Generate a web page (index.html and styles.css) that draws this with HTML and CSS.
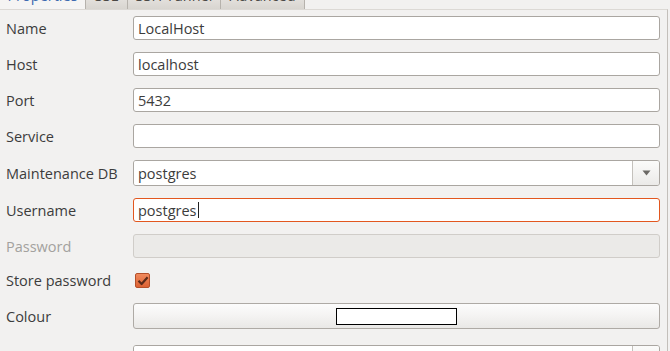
FILE: index.html
```html
<!DOCTYPE html>
<html>
<head>
<meta charset="utf-8">
<link rel="stylesheet" href="styles.css">
</head>
<body>
<div class="tabbar">
  <div class="tab tab-active"><span>Properties</span></div>
  <div class="tab tab-ssl"><span>SSL</span></div>
  <div class="tab tab-ssh"><span>SSH Tunnel</span></div>
  <div class="tab tab-adv"><span>Advanced</span></div>
</div>
<div class="panel">
  <div class="row">
    <label class="label">Name</label>
    <div class="entry">LocalHost</div>
  </div>
  <div class="row">
    <label class="label">Host</label>
    <div class="entry">localhost</div>
  </div>
  <div class="row">
    <label class="label">Port</label>
    <div class="entry">5432</div>
  </div>
  <div class="row">
    <label class="label">Service</label>
    <div class="entry"></div>
  </div>
  <div class="row row-combo">
    <label class="label">Maintenance DB</label>
    <div class="combo">
      <div class="combo-text">postgres</div>
      <div class="combo-btn"><svg width="9" height="6" viewBox="0 0 9 6"><path d="M0.5 0.5 H8.5 L4.5 5.5 Z" fill="#6b6965"/></svg></div>
    </div>
  </div>
  <div class="row">
    <label class="label">Username</label>
    <div class="entry entry-focus">postgres<span class="caret"></span></div>
  </div>
  <div class="row">
    <label class="label label-disabled">Password</label>
    <div class="entry entry-disabled"></div>
  </div>
  <div class="row row-check">
    <label class="label">Store password</label>
    <div class="checkbox"><svg width="12" height="10" viewBox="0 0 12 10"><path d="M1.5 4.8 L4.6 8 L10.6 1.2" fill="none" stroke="#5b2b1a" stroke-width="2.2" stroke-linejoin="round"/></svg></div>
  </div>
  <div class="row row-colour">
    <label class="label">Colour</label>
    <div class="button"><div class="swatch"></div></div>
  </div>
  <div class="row row-combo">
    <label class="label"></label>
    <div class="combo">
      <div class="combo-text"></div>
      <div class="combo-btn"></div>
    </div>
  </div>
</div>
</body>
</html>
```
FILE: styles.css
```css
html, body {
  margin: 0;
  padding: 0;
  background: #f2f1f0;
  overflow: hidden;
}
body {
  width: 670px;
  height: 351px;
  font-family: "Open Sans", "DejaVu Sans", sans-serif;
  font-size: 14.5px;
  color: #3c3c3c;
}
.tabbar {
  display: flex;
  height: 9px;
  overflow: hidden;
}
.tab {
  box-sizing: border-box;
  height: 9px;
  display: flex;
  align-items: flex-end;
  justify-content: center;
  background: linear-gradient(#e2dfdb, #d8d5d0);
  border-right: 1px solid #b6b2ac;
  color: #4a4845;
}
.tab span {
  line-height: 14px;
  margin-bottom: 6.5px;
  white-space: nowrap;
}
.tab-active {
  width: 86px;
  background: #f5f4f3;
  border-right: 1px solid #b6b2ac;
  color: #3d6bb0;
}
.tab-ssl { width: 42px; }
.tab-ssh { width: 93px; }
.tab-adv { width: 84px; }
.panel {
  box-sizing: border-box;
  width: 668px;
  height: 342px;
  overflow: hidden;
  border-top: 1px solid #dcd9d5;
  border-right: 1px solid #c3bfba;
  padding-top: 6px;
  display: flex;
  flex-direction: column;
  gap: 12px;
}
.row {
  display: flex;
  align-items: center;
  height: 24px;
  flex: none;
}
.row-combo { height: 26px; }
.row-check { height: 21px; }
.row-colour { height: 26px; margin-bottom: 4px; }
.label {
  width: 127px;
  padding-left: 6px;
  flex: none;
  white-space: nowrap;
}
.label-disabled { color: #a3a19e; }
.entry {
  box-sizing: border-box;
  width: 527px;
  height: 100%;
  background: #fff;
  border: 1px solid #aaa6a1;
  border-radius: 3px;
  padding-left: 4px;
  display: flex;
  align-items: center;
  color: #3c3c3c;
}
.entry-focus { border-color: #e2571f; }
.entry-disabled {
  background: #ebeae8;
  border-color: #d0cdc9;
}
.caret {
  display: inline-block;
  width: 1px;
  height: 16px;
  background: #222;
  margin-left: 1px;
}
.combo {
  box-sizing: border-box;
  width: 527px;
  height: 100%;
  display: flex;
  border: 1px solid #aaa6a1;
  border-radius: 3px;
  overflow: hidden;
}
.combo-text {
  flex: 1;
  background: #fff;
  padding-left: 4px;
  display: flex;
  align-items: center;
  border-right: 1px solid #c4c1bc;
}
.combo-btn {
  width: 26px;
  background: linear-gradient(#fbfbfa, #ebeae8);
  display: flex;
  align-items: center;
  justify-content: center;
}
.checkbox {
  box-sizing: border-box;
  width: 15px;
  height: 15px;
  margin-left: 2px;
  border: 1px solid #b4502a;
  border-radius: 2px;
  background: linear-gradient(#f08a5d, #dc6233);
  display: flex;
  align-items: center;
  justify-content: center;
}
.button {
  box-sizing: border-box;
  width: 527px;
  height: 100%;
  border: 1px solid #aeaaa5;
  border-radius: 3px;
  background: linear-gradient(#fcfcfc, #f4f3f2 50%, #e9e8e6);
  display: flex;
  align-items: center;
  justify-content: center;
}
.swatch {
  box-sizing: border-box;
  width: 121px;
  height: 17px;
  border: 1px solid #000;
  background: #fff;
}
```
